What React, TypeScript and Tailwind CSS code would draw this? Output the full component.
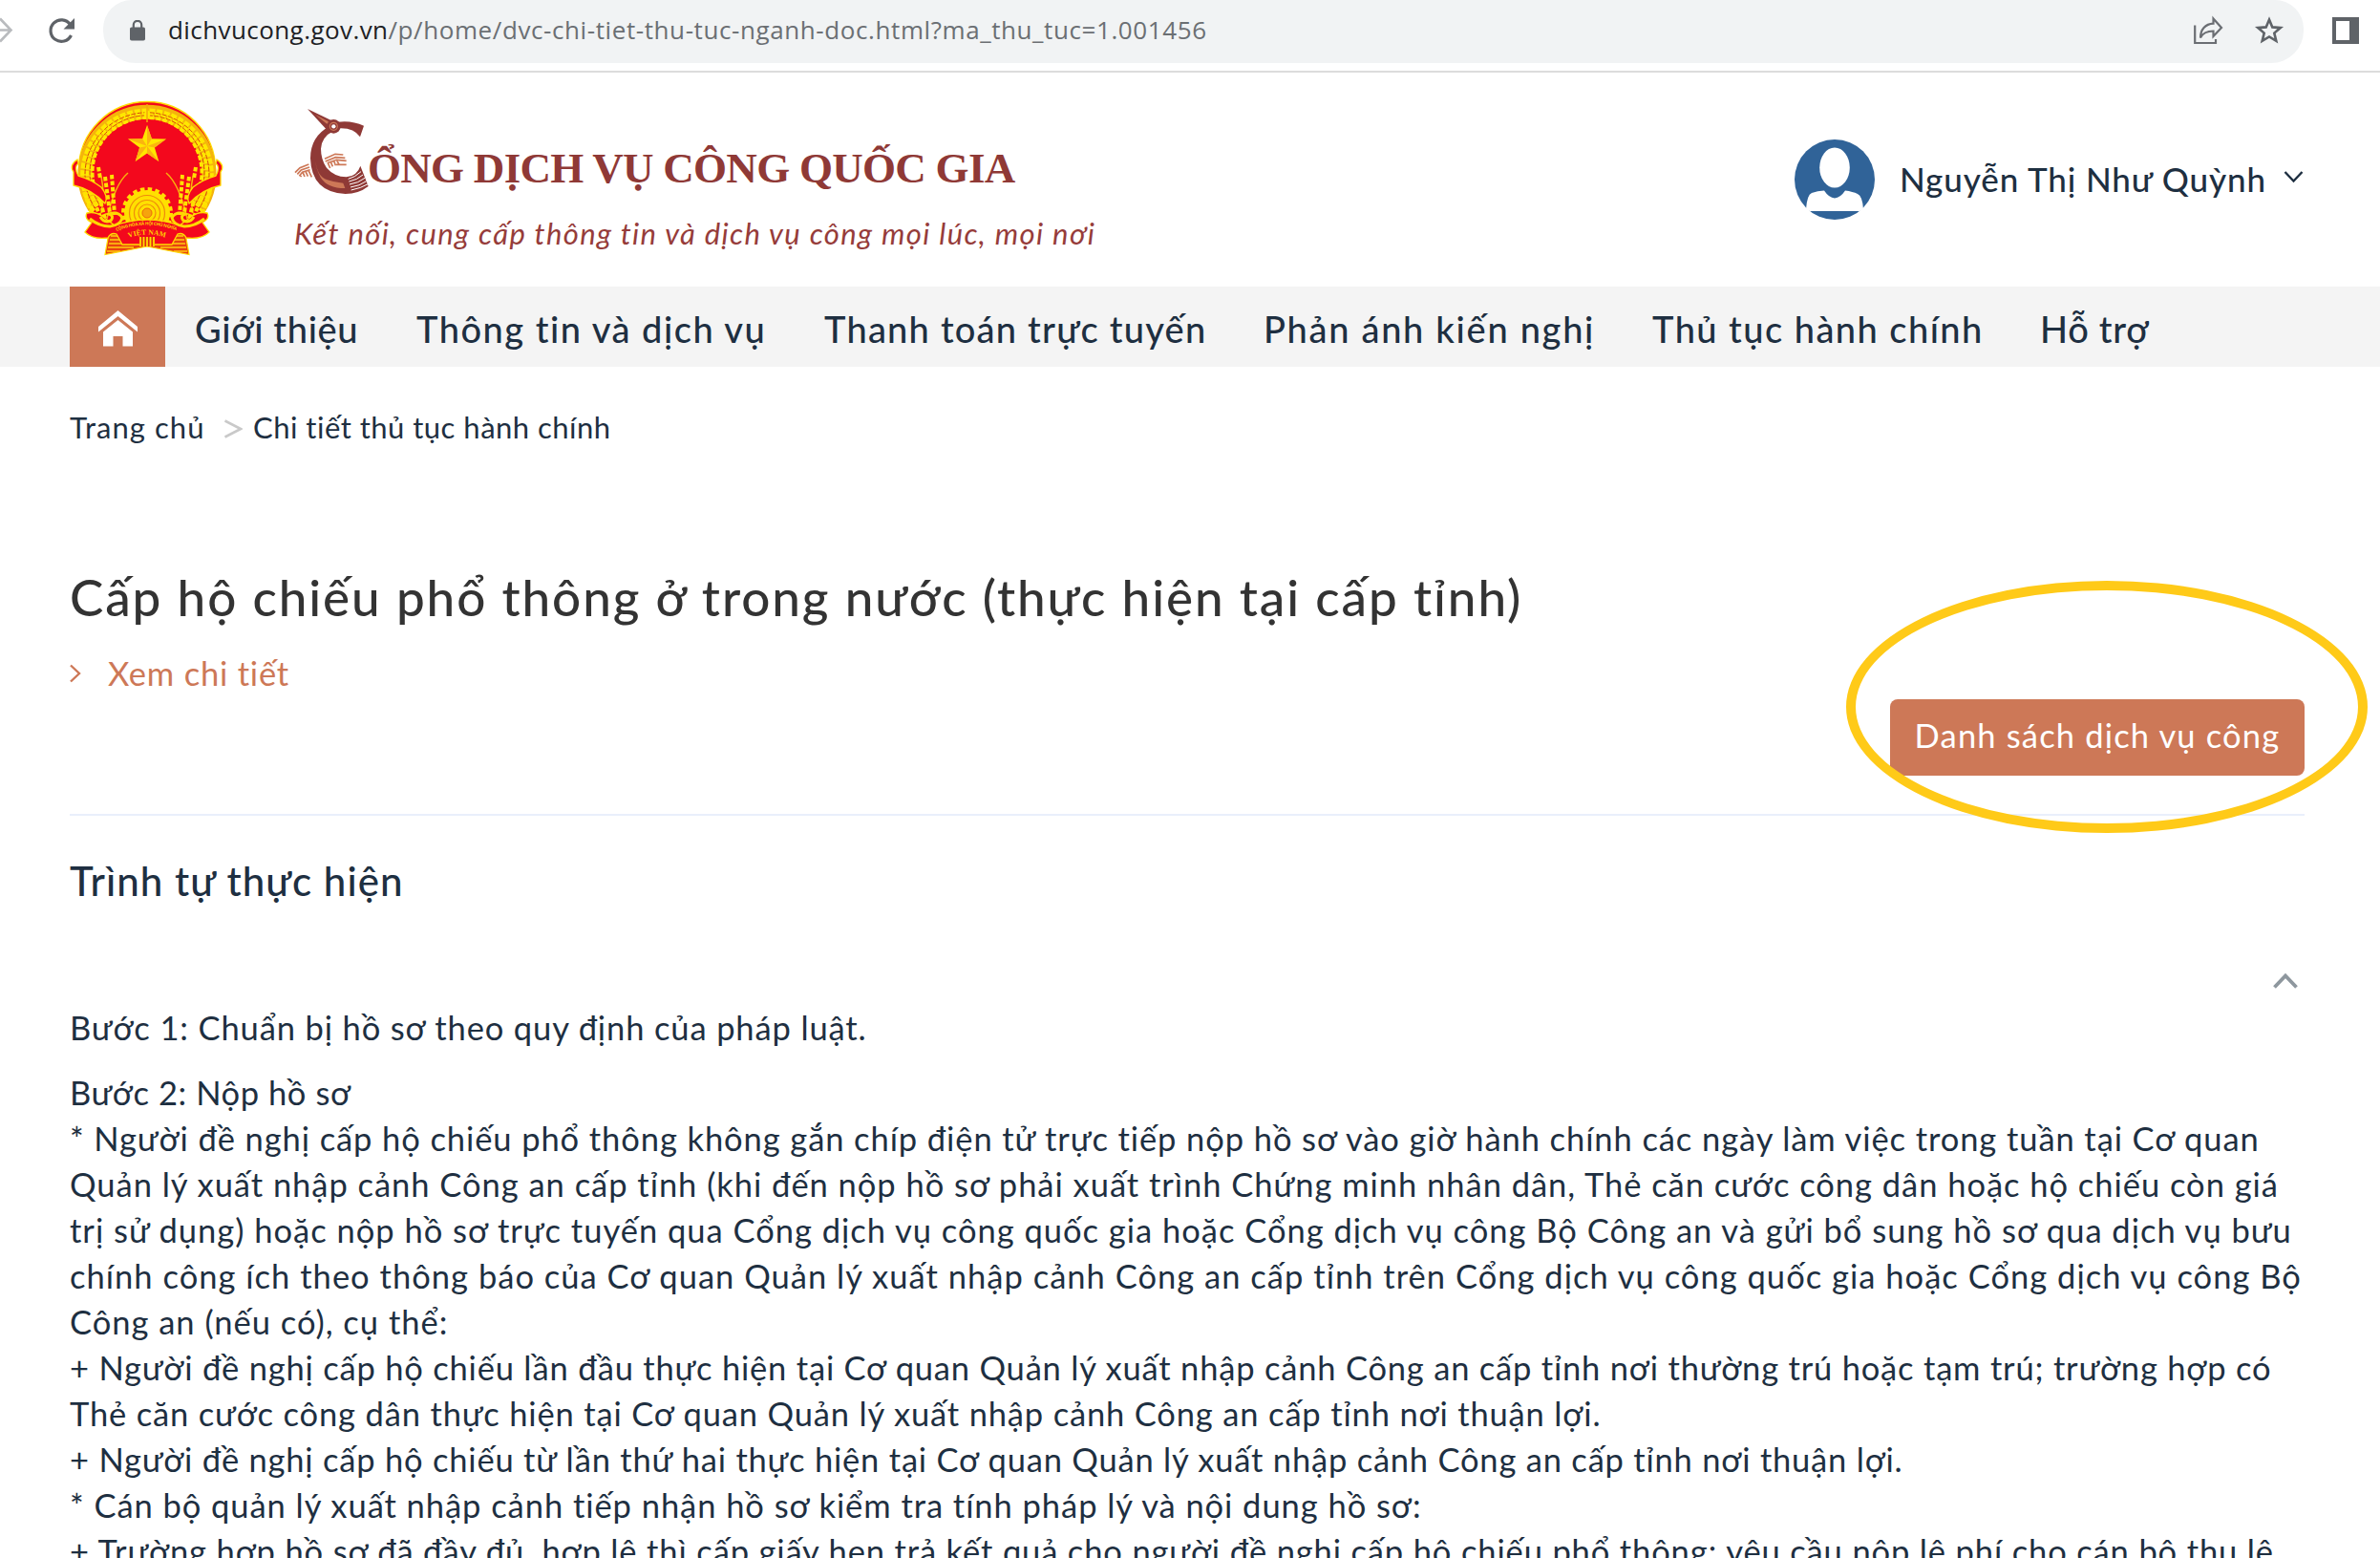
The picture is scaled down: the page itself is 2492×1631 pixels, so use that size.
import { clsx } from "clsx";

const navItems = [
  { label: "Giới thiệu", className: "w-[232px] tracking-[0.65px]" },
  { label: "Thông tin và dịch vụ", className: "w-[427px] tracking-[1.5px]" },
  { label: "Thanh toán trực tuyến", className: "w-[460px] tracking-[1.22px]" },
  { label: "Phản ánh kiến nghị", className: "w-[407px] tracking-[1.7px]" },
  { label: "Thủ tục hành chính", className: "w-[406px] tracking-[1.45px]" },
  { label: "Hỗ trợ", className: "tracking-[0.7px]" },
];

const steps = [
  { text: "Bước 2: Nộp hồ sơ", className: "tracking-[0.58px]" },
  {
    text: "* Người đề nghị cấp hộ chiếu phổ thông không gắn chíp điện tử trực tiếp nộp hồ sơ vào giờ hành chính các ngày làm việc trong tuần tại Cơ quan",
    className: "tracking-[0.91px]",
  },
  {
    text: "Quản lý xuất nhập cảnh Công an cấp tỉnh (khi đến nộp hồ sơ phải xuất trình Chứng minh nhân dân, Thẻ căn cước công dân hoặc hộ chiếu còn giá",
    className: "tracking-[0.97px]",
  },
  {
    text: "trị sử dụng) hoặc nộp hồ sơ trực tuyến qua Cổng dịch vụ công quốc gia hoặc Cổng dịch vụ công Bộ Công an và gửi bổ sung hồ sơ qua dịch vụ bưu",
    className: "tracking-[0.99px]",
  },
  {
    text: "chính công ích theo thông báo của Cơ quan Quản lý xuất nhập cảnh Công an cấp tỉnh trên Cổng dịch vụ công quốc gia hoặc Cổng dịch vụ công Bộ",
    className: "tracking-[1.02px]",
  },
  { text: "Công an (nếu có), cụ thể:", className: "tracking-[0.99px]" },
  {
    text: "+ Người đề nghị cấp hộ chiếu lần đầu thực hiện tại Cơ quan Quản lý xuất nhập cảnh Công an cấp tỉnh nơi thường trú hoặc tạm trú; trường hợp có",
    className: "tracking-[0.8px]",
  },
  {
    text: "Thẻ căn cước công dân thực hiện tại Cơ quan Quản lý xuất nhập cảnh Công an cấp tỉnh nơi thuận lợi.",
    className: "tracking-[0.84px]",
  },
  {
    text: "+ Người đề nghị cấp hộ chiếu từ lần thứ hai thực hiện tại Cơ quan Quản lý xuất nhập cảnh Công an cấp tỉnh nơi thuận lợi.",
    className: "tracking-[0.79px]",
  },
  {
    text: "* Cán bộ quản lý xuất nhập cảnh tiếp nhận hồ sơ kiểm tra tính pháp lý và nội dung hồ sơ:",
    className: "tracking-[0.95px]",
  },
  {
    text: "+ Trường hợp hồ sơ đã đầy đủ, hợp lệ thì cấp giấy hẹn trả kết quả cho người đề nghị cấp hộ chiếu phổ thông; yêu cầu nộp lệ phí cho cán bộ thu lệ",
    className: "tracking-[0.86px]",
  },
];

function BrowserBar() {
  return (
    <div className="flex h-[76px] border-b-2 border-[#dcdcdc] bg-white">
      <svg className="h-[66px] w-[108px] shrink-0" viewBox="0 0 108 66" fill="none">
        <path d="M-4 31.5H11M0 19.5L11.5 31.5L0 43.5" stroke="#b9bbbe" strokeWidth="2.6" />
        <path d="M73.5 25.5A11.3 11.3 0 1 0 74.5 37" stroke="#5f6368" strokeWidth="3.2" />
        <path d="M78 19V30.5H66.5Z" fill="#5f6368" />
      </svg>
      <div className="flex h-[66px] w-[2304px] items-center rounded-t-[30px] rounded-b-[34px] bg-[#f1f3f4]">
        <svg className="ml-[28px] h-[24px] w-[16px]" viewBox="0 0 16 24" fill="none">
          <rect x="0" y="7.5" width="16" height="14" rx="1.8" fill="#5f6368" />
          <path d="M3.8 8V5A4.2 4.2 0 0 1 12.2 5V8" stroke="#5f6368" strokeWidth="2.2" />
        </svg>
        <div className="-mt-[3px] ml-[24px] flex text-[26px] whitespace-nowrap font-['Open_Sans',sans-serif]">
          <span className="tracking-[0.42px] text-[#202124]">dichvucong.gov.vn</span>
          <span className="tracking-[0.59px] text-[#6b6f73]">
            /p/home/dvc-chi-tiet-thu-tuc-nganh-doc.html?ma_thu_tuc=1.001456
          </span>
        </div>
        <svg className="-mt-[2px] mr-[84px] ml-auto h-[30px] w-[31px] overflow-visible" viewBox="0 0 31 30" fill="none">
          <path d="M1.2 9.5V28H23V24" stroke="#6b6e73" strokeWidth="2.2" />
          <path
            d="M20.5 2.5L29 12L20.5 21V15.5C13.5 15.5 9.5 17.5 7 22.5C7 14 12 8 20.5 7.6Z"
            stroke="#6b6e73"
            strokeWidth="2.2"
          />
        </svg>
      </div>
      <svg className="-ml-[52px] h-[66px] w-[132px] shrink-0" viewBox="2360 0 132 66" fill="none">
        <path
          d="M2376 20.5L2379.3 28.4L2387.8 29.1L2381.3 34.6L2383.3 42.9L2376 38.5L2368.7 42.9L2370.7 34.6L2364.2 29.1L2372.7 28.4Z"
          stroke="#5f6368"
          strokeWidth="2.6"
        />
        <path d="M2442 18H2470V46H2442ZM2446 22V42H2460V22Z" fill="#5f6368" fillRule="evenodd" />
      </svg>
    </div>
  );
}

function Emblem() {
  return (
    <svg className="h-[180px] w-[190px] shrink-0" viewBox="0 0 190 180" fill="none">
      {/* tails under the wreath */}
      <path d="M56 138L50 171.5L94 163L138 171.5L132 138Z" fill="#e8430f" stroke="#fd0" strokeWidth="1.2" />
      <path
        d="M56 152H84M55 156H84M54 160H84M53 164H80M52 168H66M104 152H132M104 156H133M104 160H134M108 164H135M122 168H136"
        stroke="#fc1"
        strokeWidth="1.5"
      />
      <circle cx="94" cy="83" r="71.5" fill="#f3081d" stroke="#fd0" strokeWidth="1.5" />
      {/* rice ears */}
      <path d="M39 122A65 65 0 1 1 149 122" stroke="#f4b40c" strokeWidth="15" />
      <path d="M38 126A67.5 67.5 0 1 1 150 126" stroke="#ffe800" strokeWidth="4.6" strokeDasharray="6 1.8" />
      <path d="M42 121A62.5 62.5 0 1 1 146 121" stroke="#ffe800" strokeWidth="4.4" strokeDasharray="5 1.8" />
      <path d="M46 117A57.5 57.5 0 1 1 142 117" stroke="#ffe800" strokeWidth="4" strokeDasharray="5 2" />
      <path d="M40 124A65 65 0 1 1 148 124M44 119A60 60 0 1 1 144 119" stroke="#d9480b" strokeWidth="1" strokeDasharray="5 1.5" />
      <circle cx="94" cy="86" r="55" fill="#f3081d" />
      <ellipse cx="94" cy="25" rx="3" ry="4.5" fill="#ffe800" />
      <path d="M94 14V33" stroke="#f5a60c" strokeWidth="1.5" />
      {/* star */}
      <path
        d="M94 36L98.9 50.3L114 50.5L101.9 59.6L106.3 74L94 65.4L81.7 74L86.1 59.6L74 50.5L89.1 50.3Z"
        fill="#ffe600"
      />
      <path
        d="M94 36L98.9 50.3L94 58ZM114 50.5L101.9 59.6L94 58ZM106.3 74L94 65.4V58ZM81.7 74L86.1 59.6L94 58ZM74 50.5L89.1 50.3L94 58Z"
        fill="#fbb40f"
      />
      {/* lower ears bending to the middle */}
      <path d="M52 134Q60 98 74 86M46 128Q50 108 46 90M136 134Q128 98 114 86M142 128Q138 108 142 90" stroke="#f8b20c" strokeWidth="1.5" />
      <path
        d="M28 106L38 134M34 104L45 132M42 104L50 134M50 90L55 128M57 88L60 130M43 80L45 92M160 106L150 134M154 104L143 132M146 104L138 134M138 90L133 128M131 88L128 130M145 80L143 92"
        stroke="#ffe100"
        strokeWidth="4"
        strokeDasharray="4.5 2"
      />
      {/* gear */}
      <circle cx="94" cy="128" r="25" stroke="#ffdd00" strokeWidth="4" strokeDasharray="4.5 3.35" />
      <circle cx="94" cy="128" r="24" fill="#ffe000" />
      <circle cx="94" cy="128" r="18.5" stroke="#ef8b0c" strokeWidth="1.2" />
      <circle cx="94" cy="128" r="13.5" stroke="#ef8b0c" strokeWidth="1.2" />
      <circle cx="94" cy="128" r="9" stroke="#ef8b0c" strokeWidth="1.2" />
      <circle cx="94" cy="128" r="5" fill="#f6a40c" stroke="#ee6a0c" />
      {/* ribbon */}
      <path
        d="M21 72Q12 78 17 85V99Q36 103 50 118Q54 111 46 101Q36 93 22 89Q17 80 22 76Z"
        fill="#f3081d"
        stroke="#fd0"
        strokeWidth="1.3"
      />
      <path
        d="M167 72Q176 78 171 85V99Q152 103 138 118Q134 111 142 101Q152 93 166 89Q171 80 166 76Z"
        fill="#f3081d"
        stroke="#fd0"
        strokeWidth="1.3"
      />
      <path
        d="M31 128Q28 134 36 138L29 148Q37 156 53 154Q56 148 62 150L68 161H120L126 150Q132 148 135 154Q151 156 159 148L152 138Q160 134 157 128Q148 126 140 132L128 141Q94 129 60 141L48 132Q40 126 31 128Z"
        fill="#f3081d"
        stroke="#fd0"
        strokeWidth="1.3"
      />
      <path
        d="M34 134Q44 142 55 142Q66 141 68 133Q64 126 54 129Q60 131 56 136Q49 139 45 132M154 134Q144 142 133 142Q122 141 120 133Q124 126 134 129Q128 131 132 136Q139 139 143 132"
        stroke="#ffd800"
        strokeWidth="3"
      />
      <path id="motto-arc" d="M62 147Q94 134 126 147" />
      <path id="name-arc" d="M72 155Q94 146 117 155" />
      <text fill="#ffd400" className="font-['Open_Sans',sans-serif] text-[4.6px] font-bold">
        <textPath href="#motto-arc" textLength="64">CỘNG HÒA XÃ HỘI CHỦ NGHĨA</textPath>
      </text>
      <text fill="#ffd400" className="font-['Liberation_Serif',serif] text-[7.5px] font-bold">
        <textPath href="#name-arc" startOffset="3" textLength="39">VIỆT NAM</textPath>
      </text>
      <path d="M86 153.5H102V163H86Z" fill="#e02a10" />
      <path d="M87 153V163M90.5 153V163M94 153V163M97.5 153V163M101 153V163" stroke="#ffdc00" strokeWidth="1.8" />
    </svg>
  );
}

function CraneMark() {
  return (
    <svg className="h-[105px] w-[100px] shrink-0" viewBox="0 0 300 315" fill="none">
      <path d="M66 27L142 64L126 92Z" fill="#8f3936" />
      <path d="M90 45L136 69L129 76Z" fill="#cd7857" />
      <path d="M160 68Q205 62 243 80L231 115Q211 84 160 88Z" fill="#8f3936" />
      <path
        d="M134 82Q75 115 75 182Q78 288 185 294Q226 294 257 270L232 206Q222 238 188 241Q150 240 126 212Q108 186 108 152Q110 115 148 96Z"
        fill="#8f3936"
      />
      <path d="M91 190Q96 240 128 250Q150 258 178 260L184 276Q128 276 107 242Q92 215 91 190Z" fill="#cd7857" />
      <path
        d="M194 247Q215 242 234 224M196 255Q222 250 240 234M198 264Q226 260 246 244M201 273Q230 269 251 254M203 282Q234 276 256 263"
        stroke="#fff"
        strokeWidth="3"
      />
      <circle cx="148" cy="82" r="22" fill="#8f3936" />
      <circle cx="148" cy="82" r="12" stroke="#cd7857" strokeWidth="3.5" />
      <circle cx="148" cy="82" r="6.5" fill="#fff" />
      {/* wings */}
      <path
        d="M120 184L153 169L178 171M122 192L154 179L184 181M128 197L157 187L188 190M130 197L137 213M139 194L145 208M149 190L154 205M158 189L166 203M156 202L188 202"
        stroke="#cd7857"
        strokeWidth="5"
      />
      <path
        d="M27 227L42 212L70 201M34 232L46 219L72 210M40 238L50 226L74 218M43 236L47 240M51 226L57 240M60 223L67 239M69 220L79 241"
        stroke="#cd7857"
        strokeWidth="5"
      />
    </svg>
  );
}

function Header() {
  return (
    <header className="flex h-[224px] items-start pl-[60px]">
      <div className="mt-[19px]">
        <Emblem />
      </div>
      <div className="mt-[29px] ml-[50px]">
        <div className="flex h-[105px] items-start">
          <CraneMark />
          <h1 className="mt-[47px] -ml-[15px] text-[45px] leading-[48px] font-bold tracking-[-0.72px] whitespace-nowrap text-[#8f3936] font-['Liberation_Serif',serif]">
            ỔNG DỊCH VỤ CÔNG QUỐC GIA
          </h1>
        </div>
        <p className="mt-[14px] ml-[8px] text-[31px] leading-[40px] tracking-[1.36px] whitespace-nowrap text-[#963c3a] italic">
          Kết nối, cung cấp thông tin và dịch vụ công mọi lúc, mọi nơi
        </p>
      </div>
      <div className="mt-[70px] mr-[80px] ml-auto flex items-center">
        <svg className="h-[84px] w-[84px]" viewBox="0 0 84 84">
          <circle cx="42" cy="42" r="42" fill="#306398" />
          <ellipse cx="42" cy="29.5" rx="15.8" ry="21" fill="#fff" />
          <path d="M12 73Q13 58 18 56Q24 53.5 31 53.5Q36 61 42 61.5Q48 61 53 53.5Q61 54.5 66 57Q71 59 72 73L68 75H16Z" fill="#fff" />
        </svg>
        <span className="mb-[2px] ml-[26px] w-[402px] text-[35px] leading-[40px] font-medium tracking-[0.9px] whitespace-nowrap">
          Nguyễn Thị Như Quỳnh
        </span>
        <svg className="mb-[6px] h-[14px] w-[21px]" viewBox="0 0 21 14" fill="none">
          <path d="M1.5 2L10.5 11.5L19.5 2" stroke="#1e2f41" strokeWidth="2.4" />
        </svg>
      </div>
    </header>
  );
}

function Nav() {
  return (
    <nav className="flex h-[84px] items-center bg-[#f4f4f4] pl-[73px]">
      <a className="flex h-[84px] w-[100px] items-center justify-center bg-[#cd7857]">
        <svg className="mt-[3px] h-[38px] w-[41px]" viewBox="0 0 41 38" fill="#fff">
          <path d="M20.5 0L41 17V22.5L20.5 6L0 22.5V17Z" />
          <path d="M20.5 10L36 22.5V37.5H25.5V27H15.5V37.5H5V22.5Z" />
        </svg>
      </a>
      <div className="mt-[5px] ml-[31px] flex text-[38px] font-medium">
        {navItems.map((item) => (
          <a key={item.label} className={clsx("whitespace-nowrap", item.className)}>
            {item.label}
          </a>
        ))}
      </div>
    </nav>
  );
}

export default function App() {
  return (
    <div className="h-[1631px] w-[2492px] overflow-hidden bg-white text-[#1e2f41] font-['Lato',sans-serif]">
      <BrowserBar />
      <Header />
      <Nav />

      <main className="pr-[79px] pl-[73px]">
        {/* Breadcrumb */}
        <div className="flex h-[126px] items-center text-[31px] whitespace-nowrap">
          <span className="w-[162px] tracking-[1.05px]">Trang chủ</span>
          <svg className="mt-[3px] h-[20px] w-[19px]" viewBox="0 0 19 20" fill="none">
            <path d="M0.5 1.5L17 10L0.5 18.5" stroke="#c9c9c9" strokeWidth="2.6" />
          </svg>
          <span className="ml-[11px] tracking-[0.49px]">Chi tiết thủ tục hành chính</span>
        </div>

        <div className="flex h-[344px] items-end justify-between border-b-2 border-[#e9effb]">
          <div className="mb-[121px]">
            <h2 className="text-[53px] leading-[64px] font-medium tracking-[1.9px] whitespace-nowrap text-[#333]">
              Cấp hộ chiếu phổ thông ở trong nước (thực hiện tại cấp tỉnh)
            </h2>
            <a className="mt-[22px] flex h-[52px] items-center text-[34.5px] tracking-[0.8px] text-[#cd7857]">
              <svg className="h-[20px] w-[12px]" viewBox="0 0 12 20" fill="none">
                <path d="M1 1.5L10 10L1 18.5" stroke="#cd7857" strokeWidth="2.4" />
              </svg>
              <span className="ml-[28px]">Xem chi tiết</span>
            </a>
          </div>
          <div className="relative mb-[40px]">
            <button className="flex h-[80px] w-[434px] items-center justify-center rounded-lg bg-[#cd7857] pb-[5px] text-[34.5px] tracking-[1.17px] text-white">
              Danh sách dịch vụ công
            </button>
            <div className="absolute -top-[124px] -left-[46px] h-[264px] w-[546px] rounded-[50%] border-[10px] border-[#ffca18]" />
          </div>
        </div>

        <h3 className="mt-[43px] text-[42px] leading-[50px] font-medium tracking-[1.06px]">
          Trình tự thực hiện
        </h3>
        <div className="mt-[72px] flex justify-end pr-[7px]">
          <svg className="h-[16px] w-[26px]" viewBox="0 0 26 16" fill="none">
            <path d="M1.5 14.5L13 2.5L24.5 14.5" stroke="#8e979e" strokeWidth="3.8" />
          </svg>
        </div>

        <div className="mt-[17px] text-[34.5px] leading-[48px] whitespace-nowrap">
          <p className="mb-[20px] tracking-[0.87px]">Bước 1: Chuẩn bị hồ sơ theo quy định của pháp luật.</p>
          {steps.map((step) => (
            <p key={step.text} className={step.className}>
              {step.text}
            </p>
          ))}
        </div>
      </main>
    </div>
  );
}
